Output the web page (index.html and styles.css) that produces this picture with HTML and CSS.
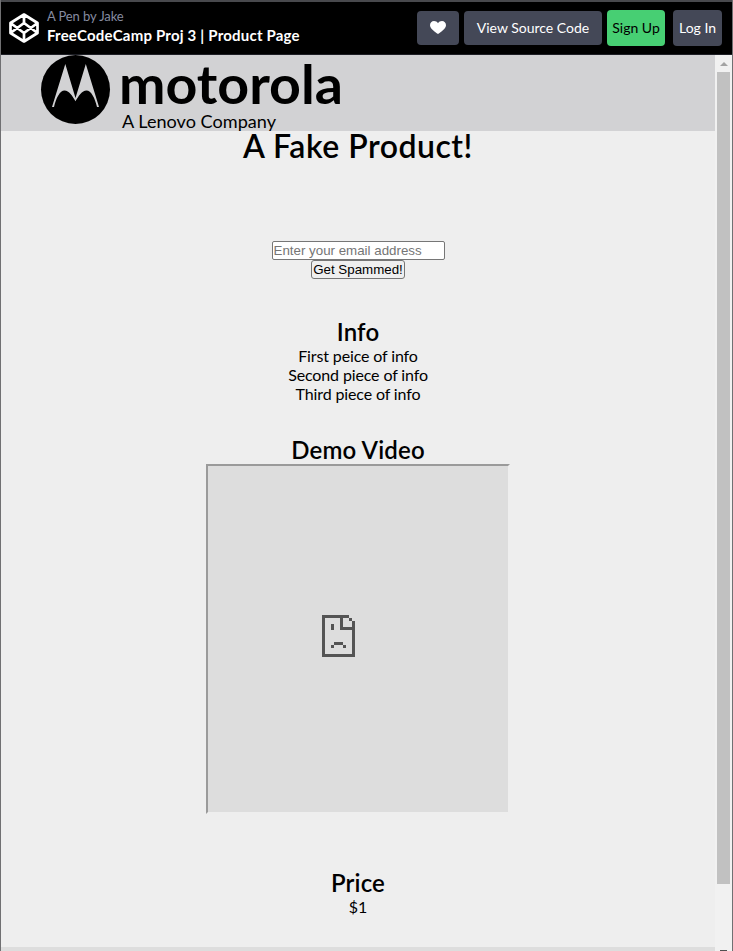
FILE: index.html
```html
<!DOCTYPE html>
<html lang="en">
<head>
<meta charset="utf-8">
<title>FreeCodeCamp Proj 3 | Product Page</title>
<link rel="stylesheet" href="styles.css">
</head>
<body>
<div class="window">
  <header class="topbar">
    <svg class="pen-logo" viewBox="0 0 32 32" fill="none" stroke="#fff" stroke-width="2.700" stroke-linejoin="round">
      <path d="M16 2.500 29.500 11v10L16 29.500 2.500 21V11zM16 2.500v8.500M16 21v8.500M2.500 11 16 21l13.500-10M2.500 21 16 11l13.500 10"/>
    </svg>
    <div class="titles">
      <div class="author">A Pen by Jake</div>
      <div class="title">FreeCodeCamp Proj 3 | Product Page</div>
    </div>
    <div class="actions">
      <a class="btn heart"><svg viewBox="0 0 16 13" width="16" height="13"><path fill="#fff" d="M8 13C5 10.800 0 7.500 0 4.200 0 1.700 1.800 0 4 0c1.700 0 3.200.8 4 2.200C8.800.8 10.300 0 12 0c2.200 0 4 1.700 4 4.200C16 7.500 11 10.800 8 13z"/></svg></a>
      <a class="btn source">View Source Code</a>
      <a class="btn signup">Sign Up</a>
      <a class="btn login">Log In</a>
    </div>
  </header>
  <div class="viewport">
    <main class="page">
      <div class="brand">
        <svg width="320" height="76" viewBox="0 0 320 76">
          <circle cx="34.500" cy="34.500" r="34.500"/>
          <path fill="#d2d2d4" d="M24.300 9 34.500 43 44.800 9 58 52h-2C54 43 50 35.500 45.500 35.500c-4.500 0-8 5.500-11 10.800C31.500 41 28 35.500 23.500 35.500 19 35.500 15 43 13 52h-2z"/>
          <text class="wordmark" x="78" y="49" textLength="224" lengthAdjust="spacingAndGlyphs">motorola</text>
          <text class="tagline" x="81" y="73" textLength="154" lengthAdjust="spacingAndGlyphs">A Lenovo Company</text>
        </svg>
      </div>
      <h1>A Fake Product!</h1>
      <form class="signup-form">
        <input type="email" placeholder="Enter your email address">
        <button type="button">Get Spammed!</button>
      </form>
      <section class="info">
        <h2>Info</h2>
        <p>First peice of info</p>
        <p>Second piece of info</p>
        <p>Third piece of info</p>
      </section>
      <section class="demo">
        <h2>Demo Video</h2>
        <div class="video">
          <svg width="33" height="42" viewBox="0 0 11 14" fill="#545454" shape-rendering="crispEdges">
            <path d="M0 0h9v1H7v3h4v10H0zM1 1v12h9V5H6V1zM9 1h1v1H9zM10 2h1v2h-1zM3 3h1v2H3zM4 9h3v1H4zM3 10h1v1H3zM7 10h1v1H7z" fill-rule="evenodd"/>
          </svg>
        </div>
      </section>
      <section class="price">
        <h2>Price</h2>
        <p>$1</p>
      </section>
      <footer class="footer"></footer>
    </main>
    <div class="scrollbar">
      <div class="arrow"></div>
      <div class="thumb"></div>
      <div class="arrow-down"></div>
    </div>
  </div>
</div>
</body>
</html>
```
FILE: styles.css
```css
* { box-sizing: border-box; margin: 0; padding: 0; }
html, body { height: 951px; overflow: hidden; }
body { font-family: Lato, sans-serif; color: #000; background: #eee; }
.window {
  height: 951px;
  display: flex;
  flex-direction: column;
  border-left: 1px solid #707072;
  border-right: 1px solid #707072;
}
.topbar {
  height: 55px;
  flex: none;
  display: flex;
  align-items: center;
  padding: 0 10px 0 7px;
  background: #000;
  border-top: 2px solid #48494d;
  border-bottom: 1px solid #1e1f26;
}
.pen-logo { width: 32px; height: 32px; flex: none; }
.titles { margin-left: 7px; white-space: nowrap; }
.author { font-size: 13px; line-height: 16px; letter-spacing: -0.1px; color: #868ca0; margin-top: -3px; }
.title { font-size: 15px; line-height: 22px; font-weight: 700; letter-spacing: 0.2px; color: #fff; }
.actions { margin-left: auto; display: flex; align-items: center; }
.btn {
  height: 34px;
  display: flex;
  align-items: center;
  justify-content: center;
  padding-bottom: 1px;
  border-radius: 4px;
  background: #444857;
  color: #fff;
  font-size: 14px;
  white-space: nowrap;
}
.heart { width: 42px; margin-right: 5px; }
.source { width: 138px; margin-right: 5px; }
.signup { width: 58px; height: 36px; margin-right: 8px; background: #47cf73; color: #000; }
.login { width: 49px; height: 36px; }
.viewport { flex: 1; display: flex; min-height: 0; }
.page { flex: 1; background: #eee; text-align: center; overflow: hidden; }
.brand { height: 76px; padding-left: 40px; background: #d2d2d4; text-align: left; }
.brand svg { display: block; overflow: visible; }
.wordmark { font: 700 54px Lato, sans-serif; }
.tagline { font: 400 17px Lato, sans-serif; }
h1 { font-size: 32px; line-height: 38px; font-weight: 600; letter-spacing: 0.5px; margin-top: -4px; }
h2 { font-size: 24px; line-height: 29px; font-weight: 600; letter-spacing: 0.15px; }
p { font-size: 16px; line-height: 19px; letter-spacing: -0.13px; }
.signup-form { margin-top: 76px; display: flex; flex-direction: column; align-items: center; }
.signup-form input {
  width: 173px;
  height: 19px;
  padding: 0 1px;
  border: 1px solid #767676;
  border-radius: 2px;
  font: 13.333px "Liberation Sans", Arial, sans-serif;
  background: #fff;
}
.signup-form input::placeholder { color: #757575; }
.signup-form button {
  width: 94px;
  height: 19px;
  border: 1px solid #767676;
  border-radius: 3px;
  background: #efefef;
  font: 13.333px "Liberation Sans", Arial, sans-serif;
  color: #000;
  white-space: nowrap;
}
.info { margin-top: 38px; }
.demo { margin-top: 32px; }
.video {
  width: 304px;
  height: 350px;
  margin: 0 auto;
  display: flex;
  align-items: center;
  justify-content: center;
  border: 2px solid;
  border-color: #9a9a9a #eee #eee #9a9a9a;
  background: #ddd;
}
.video svg { margin: -6px 39px 0 0; }
.price { margin-top: 54px; }
.footer { height: 40px; margin-top: 31px; background: #ddd; }
.scrollbar { width: 17px; flex: none; background: #f1f1f1; padding: 7px 2px 0; display: flex; flex-direction: column; }
.arrow { width: 0; margin-left: 3px; border: 4px solid transparent; border-top: 0; border-bottom-color: #a3a3a3; }
.thumb { height: 812px; width: 13px; margin-top: 6px; background: #c1c1c1; }
.arrow-down { width: 7px; height: 1px; margin: auto auto 0 3px; background: #505050; }
```
